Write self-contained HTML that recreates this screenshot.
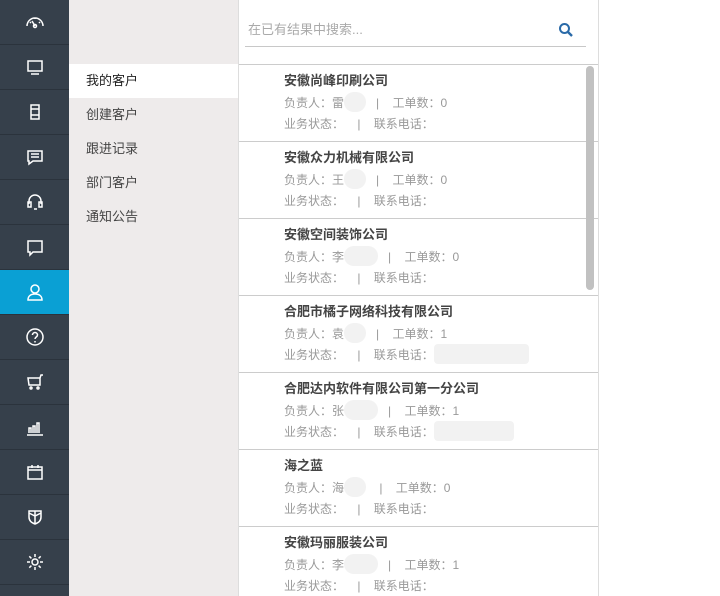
<!DOCTYPE html>
<html><head><meta charset="utf-8"><style>
*{margin:0;padding:0;box-sizing:border-box}
body{width:720px;height:596px;overflow:hidden;background:#fff;font-family:"Liberation Sans","Noto Sans CJK SC",sans-serif;position:relative}
.side{position:absolute;left:0;top:0;width:69px;height:596px;background:#36404b}
.side div{height:45px;border-bottom:1px solid #2b333c;display:flex;align-items:center;justify-content:center}
.side div.on{background:#0aa0d4}
.side svg{width:20px;height:20px;fill:none;stroke:#fff;stroke-width:1.5}
.sub{position:absolute;left:69px;top:0;width:169px;height:596px;background:#eeebeb}
.sub p{height:34px;line-height:34px;padding-left:17px;font-size:13px;color:#444}
.sub p.on{background:#fff;color:#222}
.main{position:absolute;left:238px;top:0;width:361px;height:596px;border-right:1px solid #ddd;border-left:1px solid #ddd;overflow:hidden}
.search{position:absolute;left:6px;top:16px;width:341px;height:31px;border-bottom:1px solid #c8c8c8;font-size:13px;color:#aaa;line-height:28px;padding-left:3px}
.search svg{position:absolute right:12px;top:6px}
.search svg{position:absolute;right:12px;top:6px}
.list{position:absolute;top:64px;left:0;width:360px;border-top:1px solid #ccc}
.it{height:77px;border-bottom:1px solid #ccc;padding-left:45px;position:relative}
.it b{display:block;position:absolute;top:5px;font-size:13px;color:#444;font-weight:bold}
.it .l{position:absolute;top:29px;font-size:12px;color:#999;white-space:pre}
.it .l2{top:50px}
.blur{display:inline-block;width:22px;height:20px;border-radius:10px;background:#f2f2f2;vertical-align:middle;margin-top:-4px}
.sb{position:absolute;left:347px;top:66px;width:8px;height:224px;background:#c1c1c1;border-radius:4px}
</style></head><body>
<div class="side">
<div><svg viewBox="0 0 20 20"><path d="M2 14a8 8 0 0116 0M10 14l-3-5M5 10l1 1M15 10l-1 1M10 6v1"/><circle cx="10" cy="14" r="1.5"/></svg></div>
<div><svg viewBox="0 0 20 20"><rect x="3" y="4" width="14" height="10"/><path d="M6 17h8"/></svg></div>
<div><svg viewBox="0 0 20 20"><rect x="6" y="3" width="8" height="14"/><path d="M6 7h8M6 13h8"/></svg></div>
<div><svg viewBox="0 0 20 20"><path d="M3 4h14v10H8l-4 3v-3H3z M6 7h8M6 10h8"/></svg></div>
<div><svg viewBox="0 0 20 20"><path d="M4 12V9a6 6 0 0112 0v3"/><rect x="3" y="10" width="3" height="5"/><rect x="14" y="10" width="3" height="5"/><path d="M9 17h3"/></svg></div>
<div><svg viewBox="0 0 20 20"><path d="M3 4h14v11H8l-3 3v-3H3z"/></svg></div>
<div class="on"><svg viewBox="0 0 20 20"><circle cx="10" cy="7" r="4"/><path d="M3 18c0-4 3-6 7-6s7 2 7 6z"/></svg></div>
<div><svg viewBox="0 0 20 20"><circle cx="10" cy="10" r="8"/><path d="M7.5 8a2.5 2.5 0 115 0c0 2-2.5 2-2.5 4M10 14v1.5"/></svg></div>
<div><svg viewBox="0 0 20 20"><path d="M3 6h12v7H4zM15 6l1-3h2"/><circle cx="6" cy="16" r="1"/><circle cx="13" cy="16" r="1"/></svg></div>
<div><svg viewBox="0 0 20 20"><path d="M2 18h16M4 16v-5h2v5M8 16v-7h2v7M12 16V6h2v10"/></svg></div>
<div><svg viewBox="0 0 20 20"><rect x="3" y="5" width="14" height="12"/><path d="M3 8h14M7 3v3M13 3v3"/></svg></div>
<div><svg viewBox="0 0 20 20"><path d="M4 4h12v6c0 4-3 6-6 7-3-1-6-3-6-7zM10 4v13M4 6l6 3 6-3"/></svg></div>
<div><svg viewBox="0 0 20 20"><circle cx="10" cy="10" r="3"/><path d="M10 2v3M10 15v3M2 10h3M15 10h3M4.3 4.3l2.1 2.1M13.6 13.6l2.1 2.1M4.3 15.7l2.1-2.1M13.6 6.4l2.1-2.1"/></svg></div>
</div>
<div class="sub">
<div style="height:64px"></div>
<p class="on">我的客户</p><p>创建客户</p><p>跟进记录</p><p>部门客户</p><p>通知公告</p>
</div>
<div class="main">
<div class="search">在已有结果中搜索...<svg width="16" height="16" viewBox="0 0 16 16"><circle cx="6.5" cy="6.5" r="4.5" fill="none" stroke="#2a6aa8" stroke-width="2"/><path d="M10 10l4 4" stroke="#2a6aa8" stroke-width="2.4"/></svg></div>
<div class="list">
<div class="it"><b>安徽尚峰印刷公司</b><span class="l">负责人：雷<span class="blur"></span>   |    工单数：0</span><span class="l l2">业务状态：    |    联系电话：</span></div>
<div class="it"><b>安徽众力机械有限公司</b><span class="l">负责人：王<span class="blur"></span>   |    工单数：0</span><span class="l l2">业务状态：    |    联系电话：</span></div>
<div class="it"><b>安徽空间装饰公司</b><span class="l">负责人：李<span class="blur" style="width:34px"></span>   |    工单数：0</span><span class="l l2">业务状态：    |    联系电话：</span></div>
<div class="it"><b>合肥市橘子网络科技有限公司</b><span class="l">负责人：袁<span class="blur"></span>   |    工单数：1</span><span class="l l2">业务状态：    |    联系电话：<span class="blur" style="width:95px;border-radius:4px"></span></span></div>
<div class="it"><b>合肥达内软件有限公司第一分公司</b><span class="l">负责人：张<span class="blur" style="width:34px"></span>   |    工单数：1</span><span class="l l2">业务状态：    |    联系电话：<span class="blur" style="width:80px;border-radius:4px"></span></span></div>
<div class="it"><b>海之蓝</b><span class="l">负责人：海<span class="blur"></span>    |    工单数：0</span><span class="l l2">业务状态：    |    联系电话：</span></div>
<div class="it"><b>安徽玛丽服装公司</b><span class="l">负责人：李<span class="blur" style="width:34px"></span>   |    工单数：1</span><span class="l l2">业务状态：    |    联系电话：</span></div>
</div>
<div class="sb"></div>
</div>
</body></html>
